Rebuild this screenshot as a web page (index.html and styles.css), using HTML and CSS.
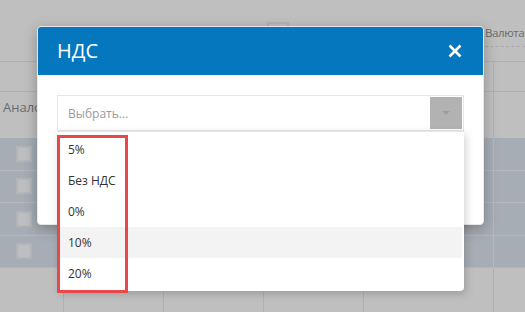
FILE: index.html
```html
<!DOCTYPE html>
<html lang="ru">
<head>
  <meta charset="UTF-8">
  <title>НДС</title>
  <link rel="stylesheet" href="styles.css">
</head>
<body>

  <div class="page">
    <div class="topbar">
      <div class="topbar-check"></div>
      <div class="currency">Валюта</div>
    </div>
    <div class="toolbar">
      <div class="cell c1"></div><div class="cell c2"></div><div class="cell c3"></div>
      <div class="cell c4"></div><div class="cell c5"></div><div class="cell c6"></div>
    </div>
    <div class="head-row">
      <div class="cell c1 head-title">Аналоги</div><div class="cell c2"></div><div class="cell c3"></div>
      <div class="cell c4"></div><div class="cell c5"></div><div class="cell c6"></div>
    </div>
    <div class="row sel"><div class="cell c1"><span class="check"></span></div><div class="cell c2"></div><div class="cell c3"></div><div class="cell c4"></div><div class="cell c5"></div><div class="cell c6"></div></div>
    <div class="row sel"><div class="cell c1"><span class="check"></span></div><div class="cell c2"></div><div class="cell c3"></div><div class="cell c4"></div><div class="cell c5"></div><div class="cell c6"></div></div>
    <div class="row sel"><div class="cell c1"><span class="check"></span></div><div class="cell c2"></div><div class="cell c3"></div><div class="cell c4"></div><div class="cell c5"></div><div class="cell c6"></div></div>
    <div class="row sel"><div class="cell c1"><span class="check"></span></div><div class="cell c2"></div><div class="cell c3"></div><div class="cell c4"></div><div class="cell c5"></div><div class="cell c6"></div></div>
    <div class="row rest"><div class="cell c1"></div><div class="cell c2"></div><div class="cell c3"></div><div class="cell c4"></div><div class="cell c5"></div><div class="cell c6"></div></div>
  </div>

  <div class="modal">
    <div class="modal-header">
      <span class="modal-title">НДС</span>
      <svg class="close" width="14" height="14" viewBox="0 0 14 14">
        <path d="M1.5 1.5 L12.5 12.5 M12.5 1.5 L1.5 12.5" stroke="#fff" stroke-width="2.6" fill="none"/>
      </svg>
    </div>
    <div class="modal-body">
      <div class="select">
        <span class="placeholder">Выбрать...</span>
        <span class="select-btn">
          <svg width="10" height="6" viewBox="0 0 10 6"><path d="M1 1 L9 1 L5 5 Z" fill="#9a9ea3"/></svg>
        </span>
        <div class="options">
          <div class="option">5%</div>
          <div class="option">Без НДС</div>
          <div class="option">0%</div>
          <div class="option hover">10%</div>
          <div class="option">20%</div>
        </div>
      </div>
    </div>
  </div>

  <div class="mark"></div>

</body>
</html>
```

FILE: styles.css
```css
* {
  margin: 0;
  padding: 0;
  box-sizing: border-box;
  font-family: "Open Sans", sans-serif;
}

body {
  width: 525px;
  height: 312px;
  overflow: hidden;
  background-color: #bfbfbf;
  position: relative;
}

.page {
  display: flex;
  flex-direction: column;
}

.topbar {
  height: 62px;
  border-bottom: 1px solid #b1b1b1;
  position: relative;
}

.topbar-check {
  position: absolute;
  left: 267px;
  top: 22px;
  width: 22px;
  height: 22px;
  border: 2px solid #b3b3b3;
}

.currency {
  position: absolute;
  left: 485px;
  top: 25px;
  width: 40px;
  font-size: 11.5px;
  letter-spacing: -0.4px;
  white-space: nowrap;
  color: #6b6b6b;
  padding-bottom: 6px;
  border-bottom: 1px dashed #a9a9a9;
}

.toolbar,
.head-row,
.row {
  display: flex;
}

.toolbar {
  height: 30px;
  border-bottom: 1px solid #b1b1b1;
}

.head-row {
  height: 46px;
}

.cell {
  flex: none;
  border-right: 1px solid #b1b1b1;
}

.c1 { width: 64px; }
.c2 { width: 100px; }
.c3 { width: 100px; }
.c4 { width: 100px; }
.c5 { width: 130px; }
.c6 { flex: 1; border-right: none; }

.head-title {
  font-size: 13px;
  color: #6b6b6b;
  padding: 6px 0 0 3px;
  white-space: nowrap;
  overflow: hidden;
}

.row.sel {
  height: 32.5px;
  background-color: #a6adb4;
  border-bottom: 1px solid #b3b8bd;
}

.row.sel .cell {
  border-right-color: #b3b8bd;
}

.row.sel .c1 {
  border-right: none;
  display: flex;
  align-items: center;
}

.check {
  margin-left: 16px;
  width: 16px;
  height: 16px;
  background-color: #bdbfc1;
  border: 2px solid #b2b6ba;
}

.row.rest {
  height: 50px;
}

.modal {
  position: absolute;
  left: 37px;
  top: 26px;
  width: 447px;
  height: 199px;
  background-color: #fff;
  border: 1px solid #e8e8e8;
  border-radius: 4px;
  box-shadow: 0 4px 14px rgba(0, 0, 0, 0.28);
}

.modal-header {
  height: 48px;
  background-color: #0577bf;
  border-radius: 3px 3px 0 0;
  display: flex;
  align-items: center;
  justify-content: space-between;
  padding: 0 21px 0 19px;
}

.modal-title {
  color: #fff;
  font-size: 20px;
  margin-top: -1px;
}

.modal-body {
  padding: 20px 19px;
}

.select {
  position: relative;
  height: 36px;
  border: 1px solid #e6e6e6;
  display: flex;
  align-items: center;
  justify-content: space-between;
  padding-left: 10px;
}

.placeholder {
  font-size: 12px;
  color: #9b9b9b;
}

.select-btn {
  width: 32px;
  height: 32px;
  margin-right: 1px;
  background-color: #b2b2b2;
  display: flex;
  align-items: center;
  justify-content: center;
}

.options {
  position: absolute;
  left: -1px;
  right: -1px;
  top: 35px;
  padding: 2px 0;
  background-color: #fff;
  border-radius: 0 0 4px 4px;
  border-top: 1px solid #e6e6e6;
  box-shadow: 2px 3px 8px rgba(0, 0, 0, 0.18);
  z-index: 2;
}

.option {
  height: 31px;
  line-height: 31px;
  padding-left: 11px;
  font-size: 12px;
  color: #333;
}

.option.hover {
  background-color: #f3f3f3;
  margin-right: 2px;
}

.mark {
  position: absolute;
  left: 57px;
  top: 135px;
  width: 71px;
  height: 158px;
  border: 3px solid #e8474b;
  z-index: 3;
}
```
